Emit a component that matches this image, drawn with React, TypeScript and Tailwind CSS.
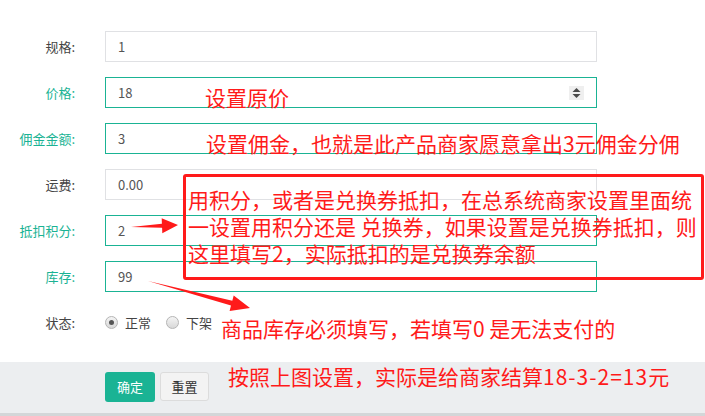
import React from "react";

const FONT = { fontFamily: '"Microsoft YaHei", "Noto Sans CJK SC", "Noto Sans", sans-serif' };

type Row = { label: string; value: string; ok: boolean; spinner?: boolean };

const rows: Row[] = [
  { label: "规格:", value: "1", ok: false },
  { label: "价格:", value: "18", ok: true, spinner: true },
  { label: "佣金金额:", value: "3", ok: true },
  { label: "运费:", value: "0.00", ok: false },
  { label: "抵扣积分:", value: "2", ok: true },
  { label: "库存:", value: "99", ok: true },
];

// tapered arrow like the ones a screenshot tool draws
function arrowPoints(x1: number, y1: number, x2: number, y2: number, headLen: number, headW: number, shaftW: number) {
  const len = Math.hypot(x2 - x1, y2 - y1);
  const ux = (x2 - x1) / len;
  const uy = (y2 - y1) / len;
  const px = -uy;
  const py = ux;
  const bx = x2 - ux * headLen;
  const by = y2 - uy * headLen;
  const pts = [
    [x1, y1],
    [bx + px * shaftW, by + py * shaftW],
    [bx + px * headW, by + py * headW],
    [x2, y2],
    [bx - px * headW, by - py * headW],
    [bx - px * shaftW, by - py * shaftW],
  ];
  return pts.map((p) => `${p[0].toFixed(1)},${p[1].toFixed(1)}`).join(" ");
}

function Spinner() {
  return (
    <div className="absolute right-[12px] top-[8px] h-[14px] w-[15px] bg-[#efefef]">
      <svg width="15" height="14" viewBox="0 0 15 14">
        <polygon points="3.5,6 11.5,6 7.5,2" fill="#4a4a4a" />
        <polygon points="3.5,8 11.5,8 7.5,12" fill="#4a4a4a" />
      </svg>
    </div>
  );
}

function Radio({ checked }: { checked?: boolean }) {
  return (
    <span className="flex h-[13px] w-[13px] items-center justify-center rounded-full border border-[#b5b5b5] bg-gradient-to-b from-[#f4f4f4] to-[#d8d8d8]">
      {checked ? <span className="h-[5px] w-[5px] rounded-full bg-[#555]" /> : null}
    </span>
  );
}

export default function App() {
  return (
    <div className="relative h-[416px] w-[705px] overflow-hidden bg-white" style={FONT}>
      <div className="flex flex-col gap-[15px] pt-[31px]">
        {rows.map((row) => (
          <div key={row.label} className="flex h-[31px] items-center">
            <div className={`w-[75px] text-right text-[13px] ${row.ok ? "text-[#1ab394]" : "text-[#444]"}`}>{row.label}</div>
            <div
              className={`relative ml-[30px] flex h-[31px] w-[492px] items-center border pl-[12px] text-[13px] text-[#555] ${
                row.ok ? "border-[#1ab394]" : "border-[#e0e1e4]"
              }`}
            >
              {row.value}
              {row.spinner ? <Spinner /> : null}
            </div>
          </div>
        ))}
        <div className="flex h-[31px] items-center">
          <div className="w-[75px] text-right text-[13px] text-[#444]">状态:</div>
          <div className="ml-[30px] flex items-center text-[13px] text-[#444]">
            <Radio checked />
            <span className="ml-[7px]">正常</span>
            <span className="ml-[15px]">
              <Radio />
            </span>
            <span className="ml-[7px]">下架</span>
          </div>
        </div>
      </div>

      <div className="mt-[24px] flex h-[54px] items-start border-b-[3px] border-[#d3d6d8] bg-[#eceef0] pl-[105px] pt-[10px]">
        <button type="button" className="h-[30px] w-[50px] rounded-[3px] bg-[#1ab394] text-[13px] text-white">
          确定
        </button>
        <button
          type="button"
          className="ml-[5px] h-[29px] w-[49px] rounded-[3px] border border-[#dcdcdc] bg-[#f3f3f3] text-[13px] text-[#333]"
        >
          重置
        </button>
      </div>

      {/* red annotations drawn over the form */}
      <div className="pointer-events-none absolute inset-0 text-[21px] leading-[21px] text-[#ff1a1a] [text-spacing-trim:space-all]">
        <div className="absolute left-[205px] top-[87px] whitespace-nowrap">设置原价</div>
        <div className="absolute left-[206px] top-[133px] whitespace-nowrap">设置佣金，也就是此产品商家愿意拿出3元佣金分佣</div>
        <div className="absolute left-[183px] top-[174px] h-[106px] w-[521px] rounded-[3px] border-[3px] border-[#ff1a1a] pl-[2px] pt-[9px] leading-[27px] whitespace-nowrap">
          用积分，或者是兑换券抵扣，在总系统商家设置里面统
          <br />
          一设置用积分还是 兑换券，如果设置是兑换券抵扣，则
          <br />
          这里填写2，实际抵扣的是兑换券余额
        </div>
        <div className="absolute left-[221px] top-[318px] whitespace-nowrap">商品库存必须填写，若填写0 是无法支付的</div>
        <div className="absolute left-[228px] top-[366px] whitespace-nowrap">
          按照上图设置，实际是给商家结算<span className="tracking-[1px]">18-3-2=13</span>元
        </div>
        <svg className="absolute left-0 top-0" width="705" height="416">
          <polygon points={arrowPoints(131, 227, 178, 225, 16, 7.5, 2)} fill="#ff1a1a" />
          <polygon points={arrowPoints(148, 281, 250, 308, 19, 8, 2.5)} fill="#ff1a1a" />
        </svg>
      </div>
    </div>
  );
}
